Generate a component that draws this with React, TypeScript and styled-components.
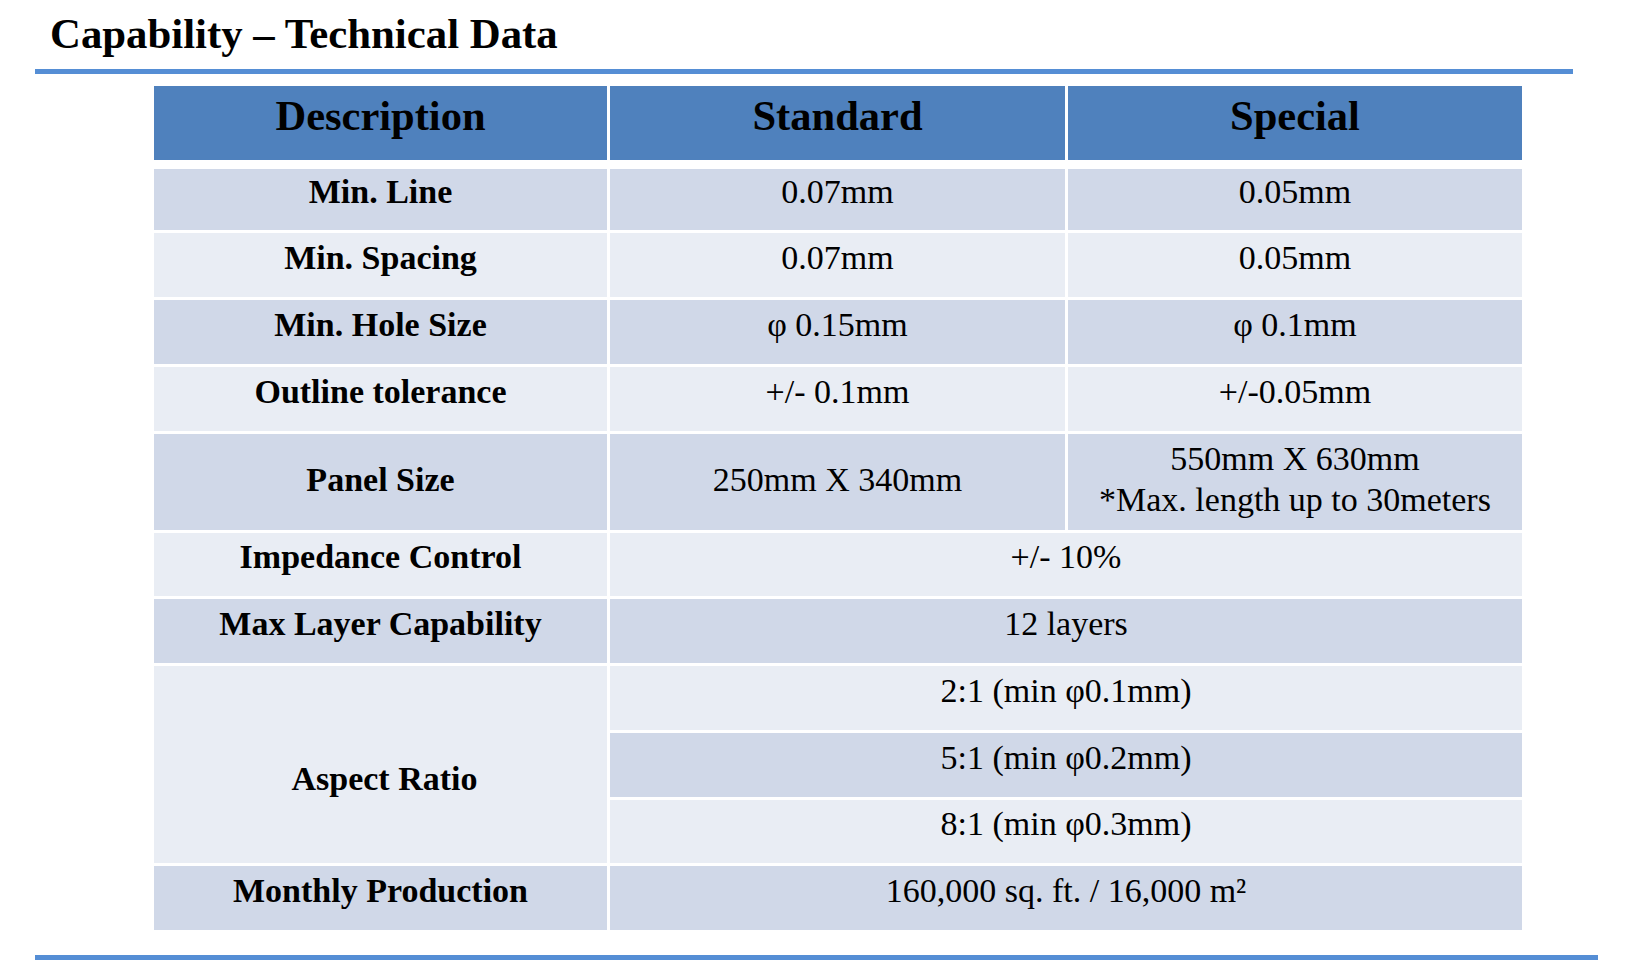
import React from "react";
import styled, { createGlobalStyle } from "styled-components";

const GlobalStyle = createGlobalStyle`
  html, body {
    margin: 0;
    padding: 0;
    background: #ffffff;
  }
  body {
    font-family: "Liberation Serif", "Times New Roman", serif;
    color: #000000;
  }
`;

const Page = styled.div`
  width: 1628px;
  height: 980px;
  display: flex;
  flex-direction: column;
  background: #ffffff;
  overflow: hidden;
`;

const Title = styled.h1`
  margin: 13px 0 0 50px;
  font-family: "Liberation Serif", "Times New Roman", serif;
  font-weight: 700;
  font-size: 42.8px;
  line-height: 42px;
  height: 42px;
  color: #000000;
  white-space: nowrap;
`;

const Rule = styled.div<{ $top: number; $width: number }>`
  margin: ${(p) => p.$top}px 0 0 35px;
  width: ${(p) => p.$width}px;
  height: 5px;
  background: #558ed5;
  flex: none;
`;

const Table = styled.div`
  margin: 12px 0 0 154px;
  width: 1368px;
  display: flex;
  flex-direction: column;
`;

const HeaderRow = styled.div`
  display: grid;
  grid-template-columns: 453px 455px 454px;
  column-gap: 3px;
  height: 74px;
`;

const HeaderCell = styled.div`
  background: #4f81bd;
  display: flex;
  align-items: center;
  justify-content: center;
  padding-bottom: 14px;
  box-sizing: border-box;
  font-weight: 700;
  font-size: 42.5px;
  line-height: 1;
  color: #000000;
  white-space: nowrap;
`;

const Body = styled.div`
  margin-top: 9px;
  display: grid;
  grid-template-columns: 453px 455px 454px;
  grid-template-rows: 61px 64px 64px 64px 96px 63px 64px 64px 64px 63px 64px;
  column-gap: 3px;
  row-gap: 3px;
`;

type Tone = "dark" | "light";

const Cell = styled.div<{
  $tone: Tone;
  $bold?: boolean;
  $span?: number;
  $rows?: number;
  $shift?: number;
  $indent?: number;
}>`
  background: ${(p) => (p.$tone === "dark" ? "#d0d8e8" : "#e9edf4")};
  grid-column: span ${(p) => p.$span ?? 1};
  grid-row: span ${(p) => p.$rows ?? 1};
  display: flex;
  flex-direction: column;
  align-items: center;
  justify-content: center;
  box-sizing: border-box;
  padding-bottom: ${(p) => Math.max(0, p.$shift ?? 16)}px;
  padding-top: ${(p) => Math.max(0, -(p.$shift ?? 16))}px;
  padding-left: ${(p) => p.$indent ?? 0}px;
  font-size: 34px;
  line-height: 41px;
  font-weight: ${(p) => (p.$bold ? 700 : 400)};
  color: #000000;
  text-align: center;
  white-space: nowrap;
`;

type Row = {
  label: string;
  tone: Tone;
  standard?: string;
  special?: string[];
  merged?: string;
};

const rows: Row[] = [
  { label: "Min. Line", tone: "dark", standard: "0.07mm", special: ["0.05mm"] },
  { label: "Min. Spacing", tone: "light", standard: "0.07mm", special: ["0.05mm"] },
  { label: "Min. Hole Size", tone: "dark", standard: "φ 0.15mm", special: ["φ 0.1mm"] },
  { label: "Outline tolerance", tone: "light", standard: "+/- 0.1mm", special: ["+/-0.05mm"] },
  {
    label: "Panel Size",
    tone: "dark",
    standard: "250mm X 340mm",
    special: ["550mm X 630mm", "*Max. length up to 30meters"],
  },
  { label: "Impedance Control", tone: "light", merged: "+/- 10%" },
  { label: "Max Layer Capability", tone: "dark", merged: "12 layers" },
];

const aspect: { text: string; tone: Tone }[] = [
  { text: "2:1 (min φ0.1mm)", tone: "light" },
  { text: "5:1 (min φ0.2mm)", tone: "dark" },
  { text: "8:1 (min φ0.3mm)", tone: "light" },
];

export default function App() {
  return (
    <>
      <GlobalStyle />
      <Page>
        <Title>Capability – Technical Data</Title>
        <Rule $top={14} $width={1538} />
        <Table>
          <HeaderRow>
            <HeaderCell>Description</HeaderCell>
            <HeaderCell>Standard</HeaderCell>
            <HeaderCell>Special</HeaderCell>
          </HeaderRow>
          <Body>
            {rows.map((r) => {
              const tall = !!r.special && r.special.length > 1;
              const shift = tall ? 6 : 16;
              return (
                <React.Fragment key={r.label}>
                  <Cell $tone={r.tone} $bold $shift={shift}>
                    {r.label}
                  </Cell>
                  {r.merged ? (
                    <Cell $tone={r.tone} $span={2}>
                      {r.merged}
                    </Cell>
                  ) : (
                    <>
                      <Cell $tone={r.tone} $shift={shift}>
                        {r.standard}
                      </Cell>
                      <Cell $tone={r.tone} $shift={shift}>
                        {r.special?.map((s) => (
                          <span key={s}>{s}</span>
                        ))}
                      </Cell>
                    </>
                  )}
                </React.Fragment>
              );
            })}
            <Cell $tone="light" $bold $rows={3} $shift={-28} $indent={8}>
              Aspect Ratio
            </Cell>
            {aspect.map((a, i) => (
              <Cell key={a.text} $tone={a.tone} style={{ gridColumn: "2 / span 2", gridRow: 8 + i }}>
                {a.text}
              </Cell>
            ))}
            <Cell $tone="dark" $bold style={{ gridColumn: 1, gridRow: 11 }}>
              Monthly Production
            </Cell>
            <Cell $tone="dark" $span={2}>
              160,000 sq. ft. / 16,000 m²
            </Cell>
          </Body>
        </Table>
        <Rule $top={25} $width={1563} />
      </Page>
    </>
  );
}
